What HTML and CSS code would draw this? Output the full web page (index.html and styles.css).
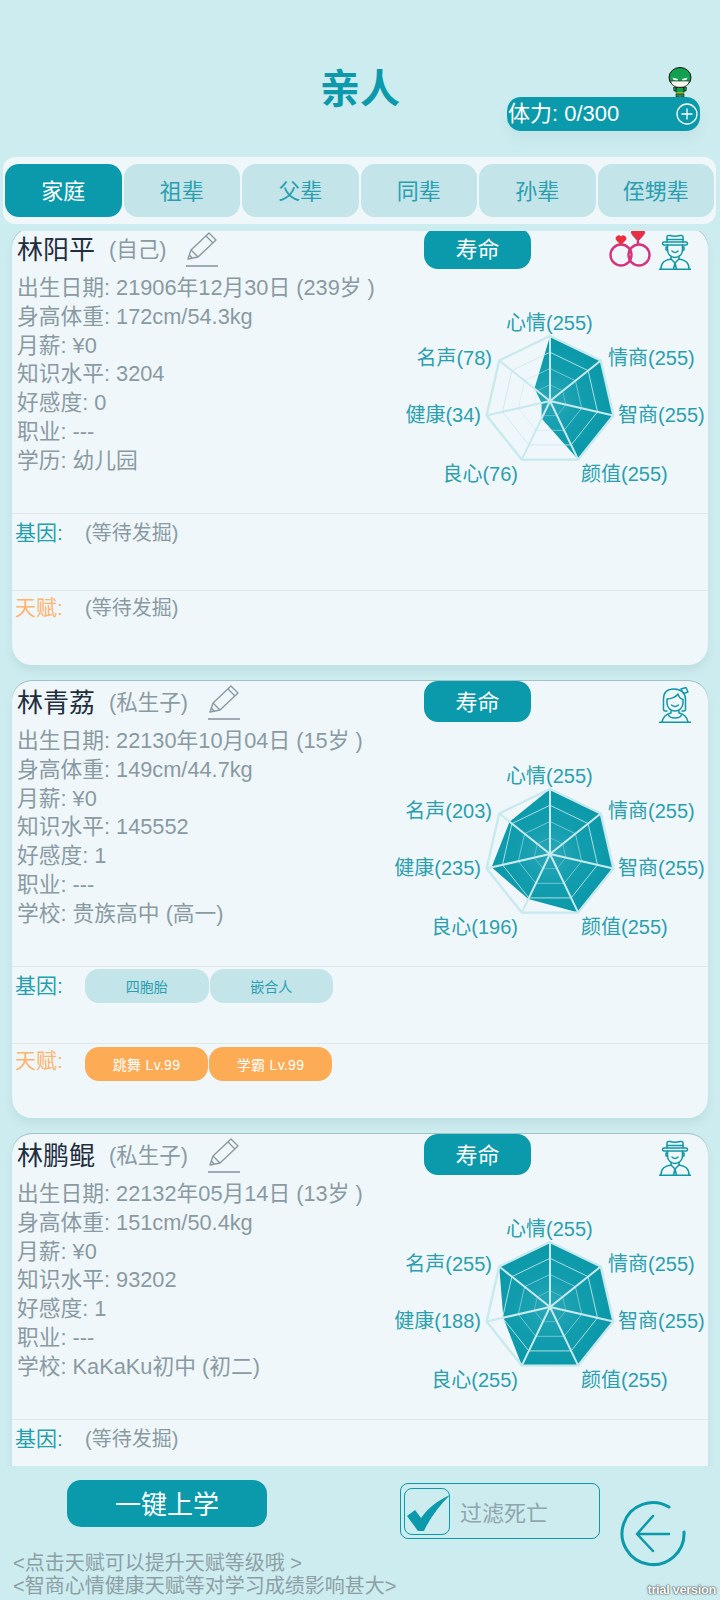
FILE: index.html
```html
<!DOCTYPE html>
<html lang="zh">
<head>
<meta charset="utf-8">
<title>亲人</title>
<link rel="stylesheet" href="styles.css">
</head>
<body>
<svg class="defs" width="0" height="0" aria-hidden="true">
  <defs>
    <radialGradient id="fill" gradientUnits="userSpaceOnUse" cx="0" cy="0" r="65">
      <stop offset="0" stop-color="#2aa8b8"/>
      <stop offset="0.5" stop-color="#119dae"/>
      <stop offset="1" stop-color="#0a98a9"/>
    </radialGradient>
    <g id="grid" fill="none" stroke="#c8e9ed" stroke-linejoin="round">
      <polygon stroke-width="0.8" stroke-opacity="0.45" points="0,-16.25 12.7,-10.1 15.8,3.6 7.05,14.6 -7.05,14.6 -15.8,3.6 -12.7,-10.1"/>
      <polygon stroke-width="0.9" stroke-opacity="0.6" points="0,-32.5 25.4,-20.3 31.7,7.2 14.1,29.3 -14.1,29.3 -31.7,7.2 -25.4,-20.3"/>
      <polygon stroke-width="1" stroke-opacity="0.85" points="0,-48.75 38.1,-30.4 47.5,10.8 21.2,43.9 -21.2,43.9 -47.5,10.8 -38.1,-30.4"/>
      <polygon stroke-width="2.4" points="0,-65 50.8,-40.5 63.4,14.5 28.2,58.6 -28.2,58.6 -63.4,14.5 -50.8,-40.5"/>
      <path stroke-width="2" d="M0 0V-65M0 0L50.8 -40.5M0 0L63.4 14.5M0 0L28.2 58.6M0 0L-28.2 58.6M0 0L-63.4 14.5M0 0L-50.8 -40.5"/>
    </g>
    <g id="pencil" fill="none" stroke="#8a9aa3" stroke-width="1.4" stroke-linejoin="round">
      <path d="M2 27 L5 18 L23 1 L30 8 L12 25 Z"/>
      <path d="M5 18 L12 25 M20 4 L27 11 M3.5 23 L6 26"/>
      <path stroke-width="1.6" d="M0 34 H32"/>
    </g>
    <g id="man" fill="none" stroke="#1098a8" stroke-width="1.5" stroke-linejoin="round" stroke-linecap="round">
      <path d="M8 8 V3 Q8 1 11 1.5 Q16 3 21 1.5 Q24 1 24 3 V8"/>
      <path d="M8 5.5 H24"/>
      <rect x="3.500" y="8" width="25" height="3" rx="1.500"/>
      <path d="M8.500 11 V16 A7.500 7.500 0 0 0 23.500 16 V11"/>
      <path d="M8.500 13 H7 V16 H8.500 M23.500 13 H25 V16 H23.500"/>
      <path d="M13 17 Q16 20 19 17"/>
      <path d="M12 22.500 V25 L16 29 L20 25 V22.500"/>
      <path d="M12 25 C6 26 2 28 2 35 M20 25 C26 26 30 28 30 35"/>
      <path d="M16 29 L14.5 35 M16 29 L17.5 35"/>
      <path d="M0 35.2 H32"/>
    </g>
    <g id="woman" fill="none" stroke="#1098a8" stroke-width="1.5" stroke-linejoin="round" stroke-linecap="round">
      <path d="M8 24 H6 Q4.500 24 4.500 22 V12 C4.500 5 9 2 15 2 C22 2 26.500 6 26.500 12 V22 Q26.500 24 25 24 H23"/>
      <path d="M8 12 C12 12 17 10 19 7 C20 10 22 12 24 12.500 V16 A8 8 0 0 1 8 16 Z"/>
      <path d="M12.500 18 Q16 21 19.500 18"/>
      <path d="M22 2 L27 0.500 L29 5 L24.500 6.500 Z"/>
      <path d="M12 24 V26 C7 27 4 30 3 35 M20 24 V26 C25 27 28 30 29 35"/>
      <path d="M9.500 28 C11 32 21 32 22.500 28"/>
      <path d="M0 35.2 H32"/>
    </g>
  </defs>
</svg>

<header class="header">
  <span></span>
  <h1 class="title">亲人</h1>
  <div class="stamina">
    <svg class="mascot" viewBox="0 0 24 30" width="24" height="30" aria-hidden="true">
      <rect x="8" y="20" width="8" height="7" rx="2" fill="#12a150" stroke="#111" stroke-width="0.8"/>
      <path d="M5.500 20.500 L8 20 L8 24 L6 24 Z M18.500 20.500 L16 20 L16 24 L18 24 Z" fill="#12a150" stroke="#111" stroke-width="0.7"/>
      <rect x="8" y="25.500" width="8" height="1.200" fill="#e6d325"/>
      <rect x="8" y="27" width="3.200" height="3" fill="#12a150" stroke="#111" stroke-width="0.6"/>
      <rect x="12.800" y="27" width="3.200" height="3" fill="#12a150" stroke="#111" stroke-width="0.6"/>
      <ellipse cx="12" cy="10.500" rx="11" ry="10" fill="#12a150" stroke="#111" stroke-width="1"/>
      <path d="M2.500 14 H21.500 Q20 20.300 12 20.300 Q4 20.300 2.500 14 Z" fill="#f7f5ee" stroke="#111" stroke-width="0.6"/>
      <path d="M4.500 10.500 L10 12 L9.500 13.500 L5.500 13 Z M19.500 10.500 L14 12 L14.500 13.500 L18.500 13 Z" fill="#e8f2ee"/>
    </svg>
    <span class="stamina-text">体力: 0/300</span>
    <svg class="plus" viewBox="0 0 24 24" width="24" height="24" aria-hidden="true">
      <circle cx="12" cy="12" r="10" fill="none" stroke="#fff" stroke-width="1.300"/>
      <path d="M12 6.500 V17.500 M6.500 12 H17.500" stroke="#fff" stroke-width="1.300"/>
    </svg>
  </div>
</header>

<nav class="tabs">
  <div class="tab tab-on">家庭</div>
  <div class="tab">祖辈</div>
  <div class="tab">父辈</div>
  <div class="tab">同辈</div>
  <div class="tab">孙辈</div>
  <div class="tab">侄甥辈</div>
</nav>

<main class="viewport">
  <div class="list">

    <article class="card">
      <div class="top">
        <div class="left">
          <div class="head">
            <span class="name">林阳平</span>
            <span class="rel">(自己)</span>
            <svg class="pencil" viewBox="0 0 32 35" width="32" height="35" aria-hidden="true"><use href="#pencil"/></svg>
          </div>
          <div class="lines">
            <div>出生日期: 21906年12月30日 (239岁 )</div>
            <div>身高体重: 172cm/54.3kg</div>
            <div>月薪: ¥0</div>
            <div>知识水平: 3204</div>
            <div>好感度: 0</div>
            <div>职业: ---</div>
            <div>学历: 幼儿园</div>
          </div>
        </div>
        <div class="right">
          <div class="actions">
            <div class="life">寿命</div>
            <div class="icons">
              <svg class="rings" viewBox="0 0 42 40" width="42" height="40" aria-hidden="true">
                <circle cx="12" cy="27" r="10.500" fill="none" stroke="#d5347c" stroke-width="2.400"/>
                <circle cx="30" cy="27" r="10.500" fill="none" stroke="#d5347c" stroke-width="2.400"/>
                <path d="M12 15 V17 M29 11 V16" stroke="#d5347c" stroke-width="2.400"/>
                <path d="M12 17 L7.500 12.500 A3 3 0 0 1 12 8.500 A3 3 0 0 1 16.500 12.500 Z" fill="#e8303f"/>
                <path d="M29 13 L23.500 7 A3.500 3.500 0 0 1 29 2 A3.500 3.500 0 0 1 34.500 7 Z" fill="#e8303f" stroke="#d5347c"/>
              </svg>
              <svg class="person" viewBox="0 0 32 36" width="32" height="36" aria-hidden="true"><use href="#man"/></svg>
            </div>
          </div>
          <div class="radar">
            <svg class="radar-svg" viewBox="-70 -70 140 140" width="140" height="140" aria-hidden="true">
              <polygon fill="url(#fill)" points="0,-65 50.8,-40.5 63.4,14.5 28.2,58.6 -8.4,17.5 -8.4,1.9 -15.5,-12.400"/>
              <use href="#grid"/>
            </svg>
            <span class="lb l0">心情(255)</span>
            <span class="lb l1">情商(255)</span>
            <span class="lb l2">智商(255)</span>
            <span class="lb l3">颜值(255)</span>
            <span class="lb l4">良心(76)</span>
            <span class="lb l5">健康(34)</span>
            <span class="lb l6">名声(78)</span>
          </div>
        </div>
      </div>
      <div class="row">
        <span class="row-label gene">基因:</span>
        <span class="pending">(等待发掘)</span>
      </div>
      <div class="row row-talent">
        <span class="row-label talent">天赋:</span>
        <span class="pending">(等待发掘)</span>
      </div>
    </article>

    <article class="card">
      <div class="top">
        <div class="left">
          <div class="head">
            <span class="name">林青荔</span>
            <span class="rel">(私生子)</span>
            <svg class="pencil" viewBox="0 0 32 35" width="32" height="35" aria-hidden="true"><use href="#pencil"/></svg>
          </div>
          <div class="lines">
            <div>出生日期: 22130年10月04日 (15岁 )</div>
            <div>身高体重: 149cm/44.7kg</div>
            <div>月薪: ¥0</div>
            <div>知识水平: 145552</div>
            <div>好感度: 1</div>
            <div>职业: ---</div>
            <div>学校: 贵族高中 (高一)</div>
          </div>
        </div>
        <div class="right">
          <div class="actions">
            <div class="life">寿命</div>
            <div class="icons">
              <svg class="person" viewBox="0 0 32 36" width="32" height="36" aria-hidden="true"><use href="#woman"/></svg>
            </div>
          </div>
          <div class="radar">
            <svg class="radar-svg" viewBox="-70 -70 140 140" width="140" height="140" aria-hidden="true">
              <polygon fill="url(#fill)" points="0,-65 50.8,-40.5 63.4,14.5 28.2,58.6 -21.7,45 -58.4,13.300 -40.4,-32.3"/>
              <use href="#grid"/>
            </svg>
            <span class="lb l0">心情(255)</span>
            <span class="lb l1">情商(255)</span>
            <span class="lb l2">智商(255)</span>
            <span class="lb l3">颜值(255)</span>
            <span class="lb l4">良心(196)</span>
            <span class="lb l5">健康(235)</span>
            <span class="lb l6">名声(203)</span>
          </div>
        </div>
      </div>
      <div class="row">
        <span class="row-label gene">基因:</span>
        <span class="chip">四胞胎</span>
        <span class="chip">嵌合人</span>
      </div>
      <div class="row row-talent">
        <span class="row-label talent">天赋:</span>
        <span class="chip chip-gold">跳舞 Lv.99</span>
        <span class="chip chip-gold">学霸 Lv.99</span>
      </div>
    </article>

    <article class="card">
      <div class="top">
        <div class="left">
          <div class="head">
            <span class="name">林鹏鲲</span>
            <span class="rel">(私生子)</span>
            <svg class="pencil" viewBox="0 0 32 35" width="32" height="35" aria-hidden="true"><use href="#pencil"/></svg>
          </div>
          <div class="lines">
            <div>出生日期: 22132年05月14日 (13岁 )</div>
            <div>身高体重: 151cm/50.4kg</div>
            <div>月薪: ¥0</div>
            <div>知识水平: 93202</div>
            <div>好感度: 1</div>
            <div>职业: ---</div>
            <div>学校: KaKaKu初中 (初二)</div>
          </div>
        </div>
        <div class="right">
          <div class="actions">
            <div class="life">寿命</div>
            <div class="icons">
              <svg class="person" viewBox="0 0 32 36" width="32" height="36" aria-hidden="true"><use href="#man"/></svg>
            </div>
          </div>
          <div class="radar">
            <svg class="radar-svg" viewBox="-70 -70 140 140" width="140" height="140" aria-hidden="true">
              <polygon fill="url(#fill)" points="0,-65 50.8,-40.5 63.4,14.5 28.2,58.6 -28.2,58.6 -46.7,10.7 -50.8,-40.5"/>
              <use href="#grid"/>
            </svg>
            <span class="lb l0">心情(255)</span>
            <span class="lb l1">情商(255)</span>
            <span class="lb l2">智商(255)</span>
            <span class="lb l3">颜值(255)</span>
            <span class="lb l4">良心(255)</span>
            <span class="lb l5">健康(188)</span>
            <span class="lb l6">名声(255)</span>
          </div>
        </div>
      </div>
      <div class="row">
        <span class="row-label gene">基因:</span>
        <span class="pending">(等待发掘)</span>
      </div>
    </article>

  </div>
</main>

<footer class="footer">
  <div class="foot-left">
    <div class="school">一键上学</div>
    <p class="notes">&lt;点击天赋可以提升天赋等级哦 &gt;<br>&lt;智商心情健康天赋等对学习成绩影响甚大&gt;</p>
  </div>
  <div class="filter">
    <span class="check">
      <svg viewBox="0 0 45 47" width="45" height="47" aria-hidden="true">
        <path d="M2 28 L10 22 L16 30 C23 20 32 13 45 7 C34 18 25 30 19 43 L13 43 Z" fill="#0a9aab"/>
      </svg>
    </span>
    <span class="filter-text">过滤死亡</span>
  </div>
  <svg class="back" viewBox="0 0 68 68" width="68" height="68" aria-hidden="true">
    <path d="M50 7 A31 31 0 1 0 65 32" fill="none" stroke="#0a9aab" stroke-width="3" stroke-linecap="round"/>
    <path d="M50 34 H18 M34 16 L18 34 L34 51" fill="none" stroke="#0a9aab" stroke-width="2.500" stroke-linecap="round" stroke-linejoin="round"/>
  </svg>
  <span class="trial">trial version</span>
</footer>
</body>
</html>
```

FILE: styles.css
```css
* { box-sizing: border-box; }

html, body {
  margin: 0;
  padding: 0;
}

body {
  width: 720px;
  height: 1600px;
  overflow: hidden;
  position: relative;
  background: #cdecef;
  font-family: "Liberation Sans", "Noto Sans CJK SC", sans-serif;
  color: #8a9aa3;
}

.defs { position: absolute; }

/* header */
.header {
  height: 157px;
  display: grid;
  grid-template-columns: 1fr auto 1fr;
  align-items: start;
  padding-top: 67px;
}

.title {
  margin: 0;
  font-size: 40px;
  line-height: 44px;
  font-weight: 700;
  color: #0a9aab;
}

.stamina {
  position: relative;
  justify-self: end;
  width: 193px;
  height: 34px;
  margin-top: 30px;
  margin-right: 20px;
  padding: 0 1px;
  display: flex;
  align-items: center;
  justify-content: space-between;
  background: #0a9aab;
  border-radius: 14px;
  box-shadow: 0 8px 14px rgba(0, 80, 90, 0.05);
  color: #fff;
  font-size: 22px;
}

.stamina-text { line-height: 34px; }

.mascot {
  position: absolute;
  right: 8px;
  top: -30px;
}

/* tabs */
.tabs {
  height: 67px;
  width: 713px;
  margin: 0 0 7px 3px;
  padding: 7px 2px;
  display: flex;
  gap: 2px;
  background: #eff7fa;
  border-radius: 12px;
}

.tab {
  flex: 1;
  display: flex;
  align-items: center;
  justify-content: center;
  padding-bottom: 4px;
  background: #c3e4e9;
  border-radius: 14px;
  color: #2b9fb0;
  font-size: 22px;
}

.tab-on {
  background: #0a9aab;
  color: #fff;
}

/* cards */
.viewport {
  height: 1235px;
  overflow: hidden;
  padding: 0 12px;
}

.list {
  display: flex;
  flex-direction: column;
  gap: 16px;
  margin-top: -3px;
}

.card {
  flex: none;
  height: 437px;
  background: #eff7fa;
  border-radius: 20px;
  box-shadow: 0 6px 10px rgba(0, 70, 80, 0.07), 0 -1px 0 rgba(0, 50, 60, 0.22);
}

.top {
  height: 285px;
  display: flex;
}

.left {
  width: 412px;
  padding-left: 5px;
}

.head {
  height: 46px;
  padding-bottom: 8px;
  display: flex;
  align-items: center;
}

.name {
  font-size: 26px;
  color: #1f2d3d;
}

.rel {
  margin-left: 14px;
  font-size: 21.500px;
}

.pencil {
  margin: 0 0 -5px 20px;
}

.lines {
  font-size: 21.750px;
  line-height: 28.800px;
  white-space: nowrap;
}

.right {
  flex: 1;
}

.actions {
  height: 41px;
  display: flex;
  justify-content: space-between;
  align-items: flex-start;
  padding-right: 17px;
}

.life {
  width: 107px;
  height: 41px;
  padding-bottom: 3px;
  display: flex;
  align-items: center;
  justify-content: center;
  background: #0a9aab;
  border-radius: 14px;
  color: #fff;
  font-size: 22px;
}

.icons {
  display: flex;
  align-items: flex-start;
  gap: 8px;
}

.person { margin-top: 6px; }

.radar {
  position: relative;
  height: 244px;
}

.radar-svg {
  position: absolute;
  left: 56px;
  top: 62px;
}

.lb {
  position: absolute;
  font-size: 20px;
  line-height: 28px;
  color: #2b9fb0;
  white-space: nowrap;
}

.l0 { left: 82px; top: 40px; }
.l1 { left: 184px; top: 75px; }
.l2 { left: 194px; top: 132px; }
.l3 { left: 157px; top: 191px; }
.l4 { right: 190px; top: 191px; }
.l5 { right: 227px; top: 132px; }
.l6 { right: 216px; top: 75px; }

/* gene and talent rows */
.row {
  height: 77px;
  padding: 2px 0 0 3px;
  display: flex;
  align-items: flex-start;
  gap: 1px;
  border-top: 1px solid #dfe9ec;
}

.row-label {
  width: 69px;
  font-size: 21px;
  line-height: 34px;
}

.gene { color: #1f9fb0; }
.talent { color: #fdb46b; }

.pending {
  font-size: 20px;
  line-height: 34px;
}

.row-talent { padding-top: 0; }
.row-talent .chip { margin-top: 3px; }

.chip {
  width: 123.500px;
  height: 34px;
  display: flex;
  align-items: center;
  justify-content: center;
  background: #c3e4e9;
  border-radius: 14px;
  color: #2b9fb0;
  font-size: 14px;
}

.chip-gold {
  width: 123px;
  background: #fdac55;
  color: #fff;
  letter-spacing: 0.3px;
}

/* footer */
.footer {
  position: relative;
  height: 134px;
  display: flex;
  align-items: flex-start;
}

.foot-left {
  width: 400px;
  padding-top: 14px;
}

.school {
  width: 200px;
  height: 47px;
  margin-left: 67px;
  padding-bottom: 2px;
  display: flex;
  align-items: center;
  justify-content: center;
  background: #0a9aab;
  border-radius: 14px;
  color: #fff;
  font-size: 26px;
}

.notes {
  margin: 25px 0 0 13px;
  font-size: 20px;
  line-height: 22.500px;
  white-space: nowrap;
  color: #8c9fa5;
}

.filter {
  width: 200px;
  height: 56px;
  margin-top: 17px;
  padding: 3px;
  display: flex;
  align-items: center;
  border: 1px solid #0a9aab;
  border-radius: 8px;
}

.check {
  width: 46px;
  height: 47px;
  border: 1px solid #0a9aab;
  border-radius: 8px;
  flex: none;
}

.check svg { display: block; margin: -1px 0 0; }

.filter-text {
  margin-left: 10px;
  font-size: 22px;
  color: #8fa5ad;
}

.back {
  margin: 34px 0 0 19px;
  flex: none;
}

.trial {
  position: absolute;
  right: 4px;
  bottom: 4px;
  font-size: 13px;
  font-weight: 700;
  line-height: 13px;
  letter-spacing: -0.4px;
  color: #fff;
  text-shadow: 0 0 2px #333, 0 0 1px #333;
}
```
